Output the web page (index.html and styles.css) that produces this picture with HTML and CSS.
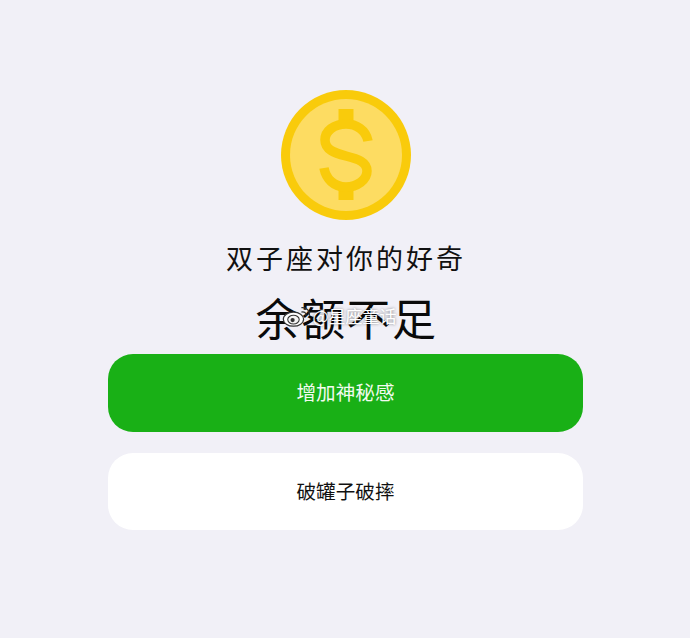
FILE: index.html
```html
<!DOCTYPE html>
<html lang="zh-CN">
<head>
<meta charset="utf-8">
<title>余额不足</title>
<link rel="stylesheet" href="styles.css">
</head>
<body>
<main class="page">
  <svg class="coin" viewBox="0 0 130 130" aria-hidden="true">
    <circle cx="65" cy="65" r="65" fill="#f9cb0b"/>
    <circle cx="65" cy="65" r="56" fill="#fddc62"/>
    <rect x="57.5" y="19" width="15" height="16" fill="#f9cb0b"/>
    <rect x="57.5" y="95" width="15" height="15" fill="#f9cb0b"/>
    <path class="coin-s" d="M87 51C85 40 75 34 65 34C53 34 44 41 44 50C44 60 54 63 65 66C77 69 86 72 86 81C86 90 76 97 65 97C53 97 45 89 43 78"/>
  </svg>
  <h2 class="subtitle">双子座对你的好奇</h2>
  <div class="headline-wrap">
    <h1 class="headline">余额不足</h1>
    <div class="watermark">
      <svg class="weibo" viewBox="0 0 34 26" aria-hidden="true">
        <ellipse cx="13" cy="16" rx="11.5" ry="8" fill="#fff" stroke="#333" stroke-width="1.4"/>
        <ellipse cx="13" cy="16.5" rx="6.5" ry="5" fill="#f4f4f4" stroke="#333" stroke-width="1.2"/>
        <circle cx="12" cy="17" r="2.4" fill="#333"/>
        <path d="M22 3C27 2 32 6 31 12M22 8C25 7 28 9 27 12" fill="none" stroke="#333" stroke-width="1.4"/>
      </svg>
      <span class="wm-text">@星座童话</span>
    </div>
  </div>
  <button class="btn btn-primary" type="button">增加神秘感</button>
  <button class="btn btn-secondary" type="button">破罐子破摔</button>
</main>
</body>
</html>
```
FILE: styles.css
```css
* { box-sizing: border-box; }
html, body { margin: 0; height: 100%; }
body {
  background: #f1f0f7;
  font-family: "Noto Sans CJK SC", "Noto Sans", sans-serif;
  color: #111;
}
.page {
  display: flex;
  flex-direction: column;
  align-items: center;
  padding-top: 90px;
  width: 690px;
  height: 638px;
  overflow: hidden;
}
.coin { width: 130px; height: 130px; display: block; margin-left: 1px; }
.coin-s { fill: none; stroke: #f9cb0b; stroke-width: 9.5; }
.subtitle {
  margin: 19px 0 0 2px;
  height: 38px;
  font-size: 27px;
  line-height: 38px;
  font-weight: 400;
  letter-spacing: 3px;
}
.headline-wrap { position: relative; margin: 10px 0 0 3px; height: 67px; }
.headline {
  margin: 0;
  font-size: 44px;
  line-height: 60px;
  font-weight: 400;
  letter-spacing: 1.5px;
  color: #0a0a0a;
}
.watermark {
  position: absolute;
  left: 26px;
  top: 16px;
  display: flex;
  align-items: center;
  white-space: nowrap;
}
.weibo { width: 30px; height: 23px; display: block; }
.wm-text {
  font-size: 17px;
  line-height: 26px;
  color: #fff;
  text-shadow: 0 0 3px rgba(0, 0, 0, .5);
  margin-left: 1px;
}
.btn {
  display: block;
  width: 475px;
  border: 0;
  border-radius: 25px;
  font-family: inherit;
  font-size: 19.6px;
  line-height: 1;
  padding: 0 0 2px;
  margin-left: 1px;
}
.btn-primary { height: 78px; background: #19b016; color: #f2fbf0; }
.btn-secondary { height: 77px; margin-top: 21px; background: #fff; color: #111; }
```
